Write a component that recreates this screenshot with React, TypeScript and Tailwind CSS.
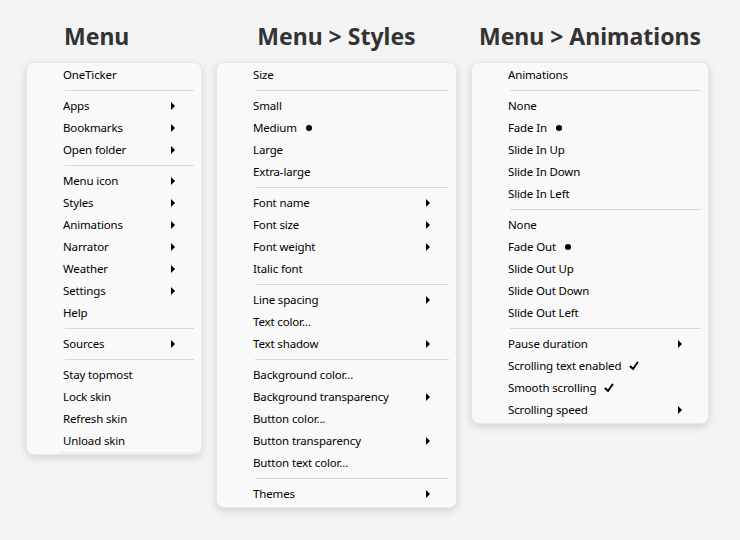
import React from 'react';

type Item =
  | { sep: true }
  | { label: string; sub?: boolean; dot?: boolean; check?: boolean };

const S: Item = { sep: true };

const mainMenu: Item[] = [
  { label: 'OneTicker' },
  S,
  { label: 'Apps', sub: true },
  { label: 'Bookmarks', sub: true },
  { label: 'Open folder', sub: true },
  S,
  { label: 'Menu icon', sub: true },
  { label: 'Styles', sub: true },
  { label: 'Animations', sub: true },
  { label: 'Narrator', sub: true },
  { label: 'Weather', sub: true },
  { label: 'Settings', sub: true },
  { label: 'Help' },
  S,
  { label: 'Sources', sub: true },
  S,
  { label: 'Stay topmost' },
  { label: 'Lock skin' },
  { label: 'Refresh skin' },
  { label: 'Unload skin' },
];

const stylesMenu: Item[] = [
  { label: 'Size' },
  S,
  { label: 'Small' },
  { label: 'Medium', dot: true },
  { label: 'Large' },
  { label: 'Extra-large' },
  S,
  { label: 'Font name', sub: true },
  { label: 'Font size', sub: true },
  { label: 'Font weight', sub: true },
  { label: 'Italic font' },
  S,
  { label: 'Line spacing', sub: true },
  { label: 'Text color...' },
  { label: 'Text shadow', sub: true },
  S,
  { label: 'Background color...' },
  { label: 'Background transparency', sub: true },
  { label: 'Button color...' },
  { label: 'Button transparency', sub: true },
  { label: 'Button text color...' },
  S,
  { label: 'Themes', sub: true },
];

const animMenu: Item[] = [
  { label: 'Animations' },
  S,
  { label: 'None' },
  { label: 'Fade In', dot: true },
  { label: 'Slide In Up' },
  { label: 'Slide In Down' },
  { label: 'Slide In Left' },
  S,
  { label: 'None' },
  { label: 'Fade Out', dot: true },
  { label: 'Slide Out Up' },
  { label: 'Slide Out Down' },
  { label: 'Slide Out Left' },
  S,
  { label: 'Pause duration', sub: true },
  { label: 'Scrolling text enabled', check: true },
  { label: 'Smooth scrolling', check: true },
  { label: 'Scrolling speed', sub: true },
];

const Check = () => (
  <svg width="10" height="10" viewBox="0 0 10 10" className="ml-[8px]">
    <path d="M1.5 5.5 L4 8 L8.5 1.5" fill="none" stroke="#000" strokeWidth="2" strokeLinecap="round" strokeLinejoin="round" />
  </svg>
);

const Menu = ({ items, width, strip }: { items: Item[]; width: string; strip?: boolean }) => (
  <div className={`${width} rounded-[8px] border border-[#e8e8e8] bg-[#f9f9f9] pt-[1px] shadow-[0_3px_8px_rgba(0,0,0,0.14)]`}>
    {items.map((it, i) =>
      'sep' in it ? (
        <div key={i} className="flex h-[9px] items-center pl-[38px] pr-[7px]">
          <div className="h-px w-full bg-[#d9d9d9]" />
        </div>
      ) : (
        <div key={i} className="flex h-[22px] items-center pl-[36px] pr-[26px] text-[11.5px] tracking-[-0.15px] text-[#000]">
          <span>{it.label}</span>
          {it.dot && <span className="ml-[9px] h-[6px] w-[6px] rounded-full bg-black" />}
          {it.check && <Check />}
          {it.sub && (
            <span className="ml-auto h-0 w-0 border-y-[4px] border-l-[4px] border-y-transparent border-l-black" />
          )}
        </div>
      )
    )}
    <div className={`ml-[32px] mr-[2px] h-[2px] ${strip ? 'bg-[#efefef]' : ''}`} />
  </div>
);

export default function App() {
  return (
    <div
      className="flex h-[540px] w-[740px] items-start gap-[14px] bg-[#f4f4f4] pl-[26px] pt-[24px]"
      style={{ fontFamily: '"Noto Sans", "Open Sans", sans-serif' }}
    >
      <div className="w-[176px]">
        <h1 className="mb-[14px] h-[24px] pl-[38px] text-[23px] font-bold leading-[24px] text-[#333]">Menu</h1>
        <Menu items={mainMenu} width="w-[176px]" strip />
      </div>
      <div className="w-[241px]">
        <h1 className="mb-[14px] h-[24px] text-center text-[23px] font-bold leading-[24px] text-[#333]">Menu &gt; Styles</h1>
        <Menu items={stylesMenu} width="w-[241px]" />
      </div>
      <div className="w-[238px]">
        <h1 className="mb-[14px] h-[24px] whitespace-nowrap text-center text-[23px] font-bold leading-[24px] text-[#333]">Menu &gt; Animations</h1>
        <Menu items={animMenu} width="w-[238px]" />
      </div>
    </div>
  );
}
